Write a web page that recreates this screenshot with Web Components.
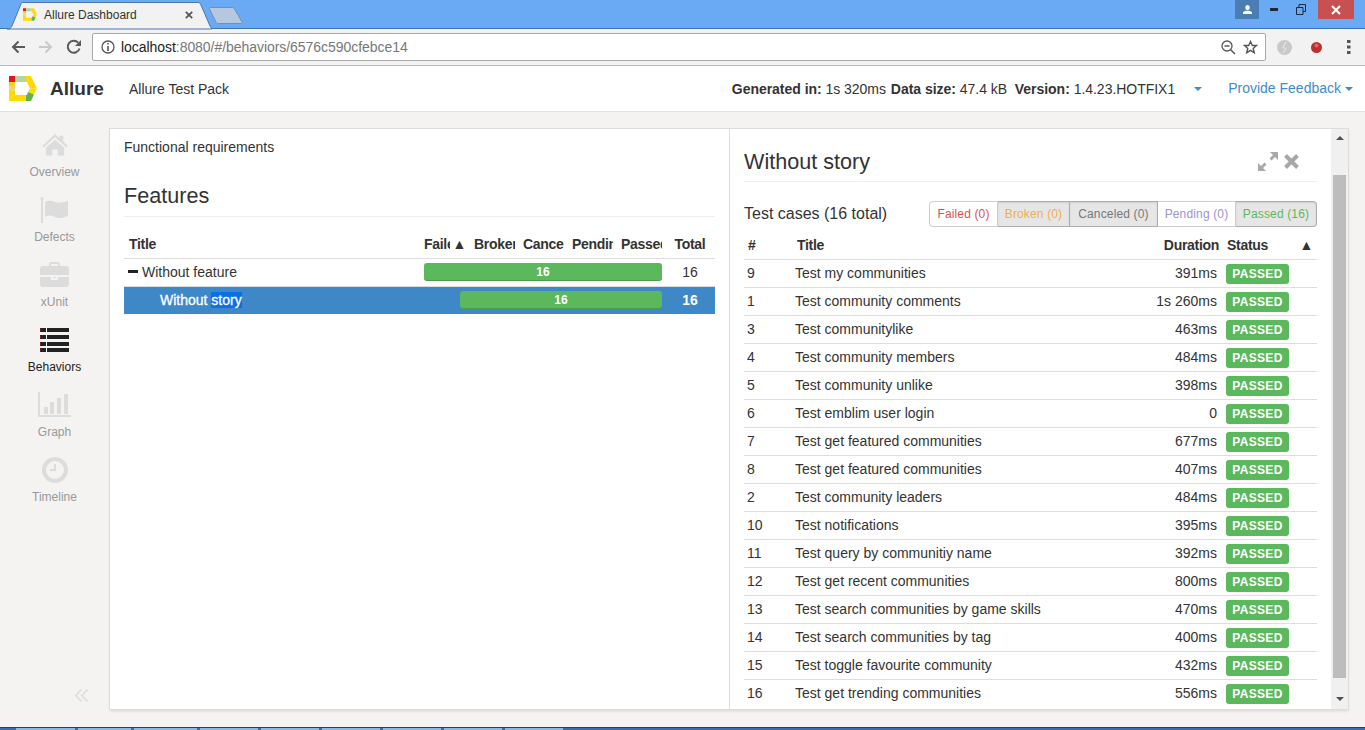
<!DOCTYPE html>
<html>
<head>
<meta charset="utf-8">
<title>Allure Dashboard</title>
<style>
	html, body { margin: 0; height: 100%; overflow: hidden; }
	body {
		display: flex;
		flex-direction: column;
		height: 730px;
		font: 14px/20px "Liberation Sans", Arial, sans-serif;
		color: #333;
		background: #f4f3f2;
	}
	.main { display: flex; flex: 1; min-height: 0; }
</style>
</head>
<body>
	<browser-chrome></browser-chrome>
	<allure-header></allure-header>
	<div class="main">
		<side-nav></side-nav>
		<report-panel>
			<features-pane slot="left"></features-pane>
			<cases-pane slot="right"></cases-pane>
		</report-panel>
	</div>
	<task-strip></task-strip>
<script>
;(function(customElements) {
	const logo = `<svg viewBox="0 0 28 25" style="display:block;width:100%;height:100%">
		<path d="M0 0h6v6H0z" fill="#e3171c"/>
		<path d="M6 0h11v6H6z" fill="#b4d5a0"/>
		<path d="M17 0h5l6 12.500h-7L18 6h-1z" fill="#ffd900"/>
		<path d="M28 12.500l-3 6-6-2.500 2-3.500z" fill="#fbdc11"/>
		<path d="M0 6h6v4H0z" fill="#f4d21a"/>
		<path d="M0 10h6v5H0z" fill="#f0d96a"/>
		<path d="M0 15h6v4h11v6H0z" fill="#ffdc00"/>
		<path d="M25 18.500L22 25h-5v-6h1l1-3z" fill="#62b34a"/>
	</svg>`

	const icons = {
		home: '<svg viewBox="0 0 28 24" width="26" height="22"><path fill="currentColor" d="M14 0l5 4.500V2h4v6l5 5-1.500 1.600L14 3.500 1.500 14.600 0 13zM4 15l10-8.800L24 15v8.500h-7V17h-6v6.500H4z"/></svg>',
		flag: '<svg viewBox="0 0 30 26" width="30" height="26"><path fill="currentColor" d="M2 0a1.700 1.700 0 0 1 1 3v23H1V3a1.700 1.700 0 0 1 1-3zM5 5c4-2 7-1 10 0s7 1 12-1c1 0 1 0 1 1v14c-5 2-9 3-13 1s-8-2-10 0z"/></svg>',
		case: '<svg viewBox="0 0 29 25" width="29" height="25"><path fill="currentColor" d="M9 4V2c0-1 1-2 2-2h7c1 0 2 1 2 2v2h6c2 0 3 1 3 3v6H0V7c0-2 1-3 3-3zm2 0h7V2h-7zM0 15h11v2c0 1 0 1 1 1h5c1 0 1 0 1-1v-2h11v7c0 2-1 3-3 3H3c-2 0-3-1-3-3zm13 0h3v1h-3z"/></svg>',
		list: '<svg viewBox="0 0 29 24" width="29" height="24"><path fill="#222" d="M0 0h6v4H0zM7 0h22v4H7zM0 7h6v4H0zM7 7h22v4H7zM0 14h6v4H0zM7 14h22v4H7zM0 20h6v4H0zM7 20h22v4H7z"/><path fill="#6b2020" d="M0 0h1v4H0zM0 7h1v4H0zM0 14h1v4H0zM0 20h1v4H0z"/></svg>',
		graph: '<svg viewBox="0 0 33 25" width="33" height="25"><path fill="currentColor" d="M0 0h2v23h31v2H0zM6 15h4v7H6zM12 10h4v12h-4zM19 6h4v16h-4zM26 2h4v20h-4z"/></svg>',
		clock: '<svg viewBox="0 0 26 26" width="26" height="26"><path fill="currentColor" fill-rule="evenodd" d="M13 0a13 13 0 1 1 0 26 13 13 0 0 1 0-26zm0 4a9 9 0 1 0 0 18 9 9 0 0 0 0-18zM14 7v7H8v-2h4V7z"/></svg>',
	}

	class BrowserChrome extends HTMLElement {
		constructor() {
			super()
			this.attachShadow({ mode: 'open' })
		}

		connectedCallback() {
			this.shadowRoot.innerHTML = `
				<style>
					:host { display: block; position: relative; font-family: "Liberation Sans", Arial, sans-serif; }
					.titlebar {
						height: 28px;
						background: #6aaaf5;
						border-bottom: 1px solid #3f73ac;
						display: flex;
						justify-content: flex-end;
						align-items: flex-start;
					}
					.tab { position: absolute; left: 6px; top: 2px; width: 206px; height: 28px; }
					.tab .shape { position: absolute; inset: 0; }
					.fav { position: absolute; left: 17px; top: 6px; width: 14px; height: 13px; }
					.tab-title { position: absolute; left: 38px; top: 3px; font-size: 12px; color: #333; line-height: 20px; }
					.tab-x { position: absolute; left: 179px; top: 9px; }
					.new-tab { position: absolute; left: 208px; top: 7px; }
					.win { display: flex; align-items: flex-start; padding-right: 11px; }
					.user { width: 24px; height: 19px; background: #4a7db3; display: flex; align-items: center; justify-content: center; }
					.min, .max { width: 38px; height: 19px; display: flex; align-items: center; justify-content: center; }
					.min { width: 21px; margin-left: 4px; margin-right: 2px; }
					.max { width: 29px; margin-right: 3px; }
					.close { width: 36px; height: 19px; background: #c75050; display: flex; align-items: center; justify-content: center; }
					.toolbar {
						height: 36px;
						background: #f2f2f2;
						border-bottom: 1px solid #bcbcbc;
						display: flex;
						align-items: center;
						box-sizing: content-box;
					}
					.nav { display: flex; width: 92px; padding-left: 10px; box-sizing: border-box; gap: 12px; }
					.url {
						width: 1174px;
						height: 28px;
						box-sizing: border-box;
						background: #fff;
						border: 1px solid #a9a9a9;
						border-radius: 2px;
						display: flex;
						align-items: center;
						padding: 0 7px 0 8px;
					}
					.addr { margin-left: 6px; font-size: 14px; letter-spacing: -.05px; color: #777; flex: 1; white-space: nowrap; }
					.addr b { font-weight: normal; color: #222; }
					.exts { display: flex; align-items: center; }
				</style>
				<div class="titlebar">
					<div class="win">
						<span class="user"><svg width="11" height="11" viewBox="0 0 11 11"><path fill="#fff" d="M5.500 1a2.200 2.400 0 0 1 0 5 2.200 2.400 0 0 1 0-5zM1 8.500c1-1.500 3-1.700 4.500-1.700s3.500.2 4.500 1.700V10H1z"/></svg></span>
						<span class="min"><svg width="8" height="3"><path fill="#1d2a38" d="M0 0h8v3H0z"/></svg></span>
						<span class="max"><svg width="10" height="11" viewBox="0 0 10 11"><path fill="none" stroke="#1d2a38" d="M.5 3.500h6.500v7H.5zM3 3V.5h6.500v7H7"/></svg></span>
						<span class="close"><svg width="10" height="10" viewBox="0 0 10 10"><path stroke="#fff" stroke-width="2" d="M1 1l8 8M9 1l-8 8"/></svg></span>
					</div>
				</div>
				<div class="tab">
					<svg class="shape" width="206" height="28" viewBox="0 0 206 28"><path d="M1 27C4 27 5 26 6 24L15 2C15.500 1 16 .5 17 .5H192C193 .5 194 1 194.500 2L204 24C205 26 206 27 206 27H1z" fill="#f2f2f2" stroke="#4a78ad"/></svg>
					<span class="fav">${logo}</span>
					<span class="tab-title">Allure Dashboard</span>
					<svg class="tab-x" width="8" height="8" viewBox="0 0 10 10"><path stroke="#555" stroke-width="2.200" d="M1 1l8 8M9 1l-8 8"/></svg>
				</div>
				<svg class="new-tab" width="36" height="17" viewBox="0 0 36 17"><path d="M3 .5H24C25 .5 26 1 26.500 2L34 15c.5 1 0 1.500-1 1.500H10C9 16.500 8.500 16 8 15L1.500 2C1 1 2 .5 3 .5z" fill="#b6c8df" stroke="#6f90b8"/></svg>
				<div class="toolbar">
					<div class="nav">
						<svg width="16" height="16" viewBox="0 0 16 16"><path fill="none" stroke="#5a5a5a" stroke-width="2" d="M15 8H3M8.500 2.500L3 8l5.500 5.500"/></svg>
						<svg width="16" height="16" viewBox="0 0 16 16"><path fill="none" stroke="#c9c9c9" stroke-width="2" d="M1 8h12M7.500 2.500L13 8l-5.500 5.500"/></svg>
						<svg width="16" height="16" viewBox="0 0 16 16"><path fill="none" stroke="#5a5a5a" stroke-width="2" d="M13.500 9.500A6 6 0 1 1 12.200 3.700"/><path fill="#5a5a5a" d="M15 1v6H9z"/></svg>
					</div>
					<div class="url">
						<svg width="14" height="14" viewBox="0 0 14 14"><circle cx="7" cy="7" r="6" fill="none" stroke="#555" stroke-width="1.300"/><path fill="#555" d="M6.200 3h1.600v1.600H6.200zM6.200 6h1.600v5H6.200z"/></svg>
						<span class="addr"><b>localhost</b>:8080/#/behaviors/6576c590cfebce14</span>
						<svg width="15" height="15" viewBox="0 0 15 15"><circle cx="6" cy="6" r="5" fill="none" stroke="#555" stroke-width="1.300"/><path stroke="#555" stroke-width="1.500" d="M3.500 6h5M9.700 9.700L14 14"/></svg>
						<svg style="margin-left:7px" width="15" height="15" viewBox="0 0 15 15"><path fill="none" stroke="#555" stroke-width="1.400" d="M7.500 1.500l1.800 4h4.200l-3.300 2.900 1.100 4.300-3.800-2.400-3.800 2.400 1.100-4.300L1.500 5.500h4.200z"/></svg>
					</div>
					<div class="exts">
						<svg style="margin-left:11px" width="15" height="15" viewBox="0 0 15 15"><circle cx="7.500" cy="7.500" r="7.500" fill="#c9c9c9"/><path fill="none" stroke="#eee" d="M9 2L6 7l3 2-3 4"/></svg>
						<svg style="margin-left:19px" width="11" height="11" viewBox="0 0 11 11"><circle cx="5.500" cy="5.500" r="5.500" fill="#b8302f"/><circle cx="5.500" cy="3.500" r="2" fill="#d96a66"/></svg>
						<svg style="margin-left:25px" width="4" height="14" viewBox="0 0 4 14"><path fill="#555" d="M0 0h3.500v3H0zM0 5.500h3.500v3H0zM0 11h3.500v3H0z"/></svg>
					</div>
				</div>
			`
		}
	}

	class AllureHeader extends HTMLElement {
		constructor() {
			super()
			this.attachShadow({ mode: 'open' })
		}

		connectedCallback() {
			this.shadowRoot.innerHTML = `
				<style>
					:host {
						display: flex;
						align-items: center;
						height: 45px;
						background: #fff;
						border-bottom: 1px solid #e0dfdd;
						padding: 0 12px 0 9px;
						font: 14px/20px "Liberation Sans", Arial, sans-serif;
						color: #333;
					}
					.logo { width: 28px; height: 25px; margin-right: 13px; }
					.brand { font-size: 19px; font-weight: bold; width: 79px; }
					.pack { flex: 1; }
					.meta { display: flex; white-space: pre; letter-spacing: -.03px; }
					.caret { width: 0; height: 0; border: 4px solid transparent; border-top-color: #428bca; border-bottom: 0; margin: 0; }
					.c1 { margin-left: 19px; margin-right: 26px; }
					.c2 { margin-left: 4px; }
					a { color: #428bca; position: relative; top: -1px; }
				</style>
				<span class="logo">${logo}</span>
				<span class="brand">Allure</span>
				<span class="pack">Allure Test Pack</span>
				<span class="meta"><b>Generated in:</b> 1s 320ms <b style="margin-left:1px">Data size:</b> 47.4 kB  <b>Version:</b> 1.4.23.HOTFIX1</span>
				<span class="caret c1"></span>
				<a>Provide Feedback</a>
				<span class="caret c2"></span>
			`
		}
	}

	class NavItem extends HTMLElement {
		static get observedAttributes() {
			return ['icon', 'label', 'active']
		}

		constructor() {
			super()
			this.attachShadow({ mode: 'open' })
		}

		connectedCallback() {
			this.shadowRoot.innerHTML = `
				<style>
					:host {
						display: flex;
						flex-direction: column;
						align-items: center;
						height: 65px;
						color: #999;
						font-size: 12px;
					}
					:host([active]) { color: #222; }
					.ic { height: 31px; display: flex; align-items: center; justify-content: center; color: #dcdcdc; }
					.lb { line-height: 18px; margin-top: 3px; }
				</style>
				<span class="ic">${icons[this.getAttribute('icon')]}</span>
				<span class="lb">${this.getAttribute('label')}</span>
			`
		}
	}

	class SideNav extends HTMLElement {
		constructor() {
			super()
			this.attachShadow({ mode: 'open' })
		}

		connectedCallback() {
			this.shadowRoot.innerHTML = `
				<style>
					:host {
						display: flex;
						flex-direction: column;
						width: 110px;
						padding: 17px 1px 0 0;
						box-sizing: border-box;
						font-family: "Liberation Sans", Arial, sans-serif;
					}
					.collapse { margin-top: auto; margin-bottom: 25px; padding-left: 75px; line-height: 0; }
				</style>
				<nav-item icon="home" label="Overview"></nav-item>
				<nav-item icon="flag" label="Defects"></nav-item>
				<nav-item icon="case" label="xUnit"></nav-item>
				<nav-item icon="list" label="Behaviors" active></nav-item>
				<nav-item icon="graph" label="Graph"></nav-item>
				<nav-item icon="clock" label="Timeline"></nav-item>
				<div class="collapse">
					<svg width="13" height="13" viewBox="0 0 13 13"><path fill="none" stroke="#dcdcdc" stroke-width="1.600" d="M6.500 .5L.8 6.500l5.700 6M12.500 .5L6.800 6.500l5.700 6"/></svg>
				</div>
			`
		}
	}

	class ReportPanel extends HTMLElement {
		constructor() {
			super()
			this.attachShadow({ mode: 'open' })
		}

		connectedCallback() {
			this.shadowRoot.innerHTML = `
				<style>
					:host {
						display: flex;
						width: 1238px;
						height: 580px;
						margin-top: 17px;
						background: #fff;
						box-shadow: 0 0 0 1px #dddcda, 0 2px 3px rgba(0, 0, 0, .12);
						font: 14px/20px "Liberation Sans", Arial, sans-serif;
						color: #333;
					}
					.l { width: 620px; border-right: 1px solid #ddd; box-sizing: border-box; }
					.r { flex: 1; min-width: 0; overflow: hidden; }
				</style>
				<div class="l"><slot name="left"></slot></div>
				<div class="r"><slot name="right"></slot></div>
			`
		}
	}

	class FeaturesPane extends HTMLElement {
		constructor() {
			super()
			this.attachShadow({ mode: 'open' })
		}

		connectedCallback() {
			this.shadowRoot.innerHTML = `
				<style>
					:host { display: block; padding: 8px 14px 0 14px; }
					.crumb { height: 20px; }
					h2 { font-size: 21.6px; font-weight: normal; line-height: 24px; margin: 27px 0 0; padding-bottom: 8px; border-bottom: 1px solid #eee; }
					.row {
						display: grid;
						grid-template-columns: 295px 50px 49px 49px 49px 49px 50px;
						height: 28px;
						box-sizing: border-box;
						align-items: center;
					}
					.head { margin-top: 13px; height: 29px; padding-bottom: 1px; border-bottom: 1px solid #ddd; font-weight: bold; letter-spacing: -.3px; }
					.cell { margin: 0 3px 0 5px; overflow: hidden; white-space: nowrap; display: block; }
					.sort { display: flex; margin-right: 3px; }
					.sort span { flex: 1; min-width: 0; overflow: hidden; margin-right: 2px; }
					.sort i { font-style: normal; flex: none; }
					.feature { border-bottom: 1px solid #ddd; }
					.feature .t { padding-left: 4px; display: flex; align-items: center; margin-bottom: 2px; }
					.dash { width: 10px; height: 3px; background: #222; margin-right: 4px; }
					.bar {
						grid-column: 2 / 7;
						margin: 0 3px 1px 5px;
						height: 18px;
						line-height: 18px;
						background: #5cb85c;
						border-radius: 3px;
						color: #fff;
						font-size: 12px;
						font-weight: bold;
						text-align: center;
						box-shadow: inset 0 -1px 0 rgba(0, 0, 0, .15);
					}
					.tot { text-align: center; margin-bottom: 2px; }
					.head .tot { margin-bottom: 0; }
					.story { background: #3f88c8; color: #fff; height: 27px; }
					.story .t { padding-left: 36px; margin-bottom: 1px; -webkit-text-stroke: .3px #fff; }
					.story .tot { font-weight: bold; margin-bottom: 1px; }
					.story .bar { margin-left: 41px; }
					.story mark { background: #0a6fe8; color: #fff; padding: 0; }
				</style>
				<div class="crumb">Functional requirements</div>
				<h2>Features</h2>
				<div class="row head">
					<span style="padding-left:5px">Title</span>
					<span class="cell sort"><span>Failed</span><i>▲</i></span>
					<span class="cell">Broken</span>
					<span class="cell">Canceled</span>
					<span class="cell">Pending</span>
					<span class="cell">Passed</span>
					<span class="tot">Total</span>
				</div>
				<div class="row feature">
					<span class="t"><span class="dash"></span>Without feature</span>
					<div class="bar">16</div>
					<span class="tot">16</span>
				</div>
				<div class="row story">
					<span class="t"><span>Without <mark>story</mark></span></span>
					<div class="bar">16</div>
					<span class="tot">16</span>
				</div>
			`
		}
	}

	class CaseRow extends HTMLElement {
		constructor() {
			super()
			this.attachShadow({ mode: 'open' })
		}

		connectedCallback() {
			this.shadowRoot.innerHTML = `
				<style>
					:host {
						display: grid;
						grid-template-columns: 51px 1fr 110px 98px;
						align-items: center;
						height: 28px;
						box-sizing: border-box;
						border-top: 1px solid #ddd;
					}
					.txt { margin-bottom: 2px; }
					.n { padding-left: 3px; }
					.d { text-align: right; padding-right: 2px; }
					.badge {
						display: block;
						width: 63px;
						height: 20px;
						margin-left: 7px;
						background: #5cb85c;
						border-radius: 3px;
						color: #fff;
						font-size: 12px;
						font-weight: bold;
						letter-spacing: .3px;
						line-height: 20px;
						text-align: center;
					}
				</style>
				<span class="txt n">${this.getAttribute('num')}</span>
				<span class="txt">${this.getAttribute('name')}</span>
				<span class="txt d">${this.getAttribute('time')}</span>
				<span class="badge">PASSED</span>
			`
		}
	}

	class CasesPane extends HTMLElement {
		constructor() {
			super()
			this.attachShadow({ mode: 'open' })
		}

		connectedCallback() {
			const cases = [
				[9, 'Test my communities', '391ms'],
				[1, 'Test community comments', '1s 260ms'],
				[3, 'Test communitylike', '463ms'],
				[4, 'Test community members', '484ms'],
				[5, 'Test community unlike', '398ms'],
				[6, 'Test emblim user login', '0'],
				[7, 'Test get featured communities', '677ms'],
				[8, 'Test get featured communities', '407ms'],
				[2, 'Test community leaders', '484ms'],
				[10, 'Test notifications', '395ms'],
				[11, 'Test query by communitiy name', '392ms'],
				[12, 'Test get recent communities', '800ms'],
				[13, 'Test search communities by game skills', '470ms'],
				[14, 'Test search communities by tag', '400ms'],
				[15, 'Test toggle favourite community', '432ms'],
				[16, 'Test get trending communities', '556ms'],
			]
			const rows = cases
				.map(c => `<case-row num="${c[0]}" name="${c[1]}" time="${c[2]}"></case-row>`)
				.join('')
			this.shadowRoot.innerHTML = `
				<style>
					:host { display: flex; height: 580px; overflow: hidden; }
					.body { flex: 1; min-width: 0; padding: 0 14px; overflow: hidden; }
					.top {
						display: flex;
						align-items: center;
						justify-content: space-between;
						height: 53px;
						box-sizing: border-box;
						border-bottom: 1px solid #eee;
						font-size: 21.6px;
						font-weight: normal;
						padding-top: 13px;
					}
					.tools { display: flex; align-items: center; gap: 6px; padding-right: 18px; }
					.filter { display: flex; align-items: center; justify-content: space-between; margin-top: 19px; height: 26px; }
					.filter .cap { font-size: 16px; }
					.btns { display: flex; height: 26px; }
					.btns span {
						font-size: 12px;
						letter-spacing: .15px;
						line-height: 24px;
						border: 1px solid #ccc;
						border-left-width: 0;
						background: #fff;
						box-sizing: border-box;
						text-align: center;
					}
					.btns span:first-child { border-left-width: 1px; border-radius: 4px 0 0 4px; }
					.btns span:last-child { border-radius: 0 4px 4px 0; }
					.btns .on { background: #e6e6e6; border-color: #adadad; box-shadow: inset 0 1px 2px rgba(0, 0, 0, .1); }
					.head {
						display: grid;
						grid-template-columns: 53px 1fr 106px 98px;
						height: 32px;
						align-items: end;
						font-weight: bold;
						letter-spacing: -.3px;
						box-sizing: border-box;
						padding-bottom: 4px;
					}
					.head .n { padding-left: 4px; }
					.head .d { text-align: right; padding-right: 0; }
					.head .s { display: flex; justify-content: space-between; padding: 0 4px 0 8px; }
					.bar {
						width: 17px;
						flex: none;
						background: #f0f0f0;
						display: flex;
						flex-direction: column;
						align-items: center;
						padding-top: 46px;
						box-sizing: border-box;
						position: relative;
					}
					.thumb { width: 13px; height: 503px; background: #bdbdbd; }
					.up, .down { position: absolute; left: 5px; width: 0; height: 0; border: 4px solid transparent; }
					.up { top: 7px; border-bottom-color: #505050; border-top: 0; }
					.down { bottom: 8px; border-top-color: #505050; border-bottom: 0; }
				</style>
				<div class="body">
					<div class="top">
						<span>Without story</span>
						<span class="tools">
							<svg width="20" height="19" viewBox="0 0 20 19"><path fill="#a8a8a8" d="M12 0h8v8l-3-3-3.500 3.500-2-2L15 3zM8 19H0v-8l3 3 3.500-3.500 2 2L5 16z"/></svg>
							<svg width="15" height="15" viewBox="0 0 15 15"><path stroke="#a8a8a8" stroke-width="4" d="M1.500 1.500l12 12M13.500 1.500l-12 12"/></svg>
						</span>
					</div>
					<div class="filter">
						<span class="cap">Test cases (16 total)</span>
						<div class="btns">
							<span style="width:69px;color:#d9534f">Failed (0)</span>
							<span class="on" style="width:72px;color:#f0ad4e">Broken (0)</span>
							<span class="on" style="width:88px;color:#777">Canceled (0)</span>
							<span style="width:78px;color:#9d93cf">Pending (0)</span>
							<span class="on" style="width:81px;color:#5cb85c">Passed (16)</span>
						</div>
					</div>
					<div class="head">
						<span class="n">#</span>
						<span>Title</span>
						<span class="d">Duration</span>
						<span class="s"><span>Status</span><span>▲</span></span>
					</div>
					${rows}
				</div>
				<div class="bar">
					<span class="up"></span>
					<div class="thumb"></div>
					<span class="down"></span>
				</div>
			`
		}
	}

	class TaskStrip extends HTMLElement {
		constructor() {
			super()
			this.attachShadow({ mode: 'open' })
		}

		connectedCallback() {
			const widths = [59, 53, 63, 58, 58, 58, 58, 58, 58]
			this.shadowRoot.innerHTML = `
				<style>
					:host {
						display: flex;
						gap: 3px;
						height: 3px;
						padding-left: 16px;
						background: #3e6f9f;
						border-top: 1px solid #23405f;
						box-sizing: border-box;
					}
					span { background: #8db8e2; height: 2px; }
				</style>
				${widths.map(w => `<span style="width:${w}px"></span>`).join('')}
			`
		}
	}

	customElements.define('browser-chrome', BrowserChrome)
	customElements.define('allure-header', AllureHeader)
	customElements.define('nav-item', NavItem)
	customElements.define('side-nav', SideNav)
	customElements.define('report-panel', ReportPanel)
	customElements.define('features-pane', FeaturesPane)
	customElements.define('case-row', CaseRow)
	customElements.define('cases-pane', CasesPane)
	customElements.define('task-strip', TaskStrip)
})(customElements)
</script>
</body>
</html>
